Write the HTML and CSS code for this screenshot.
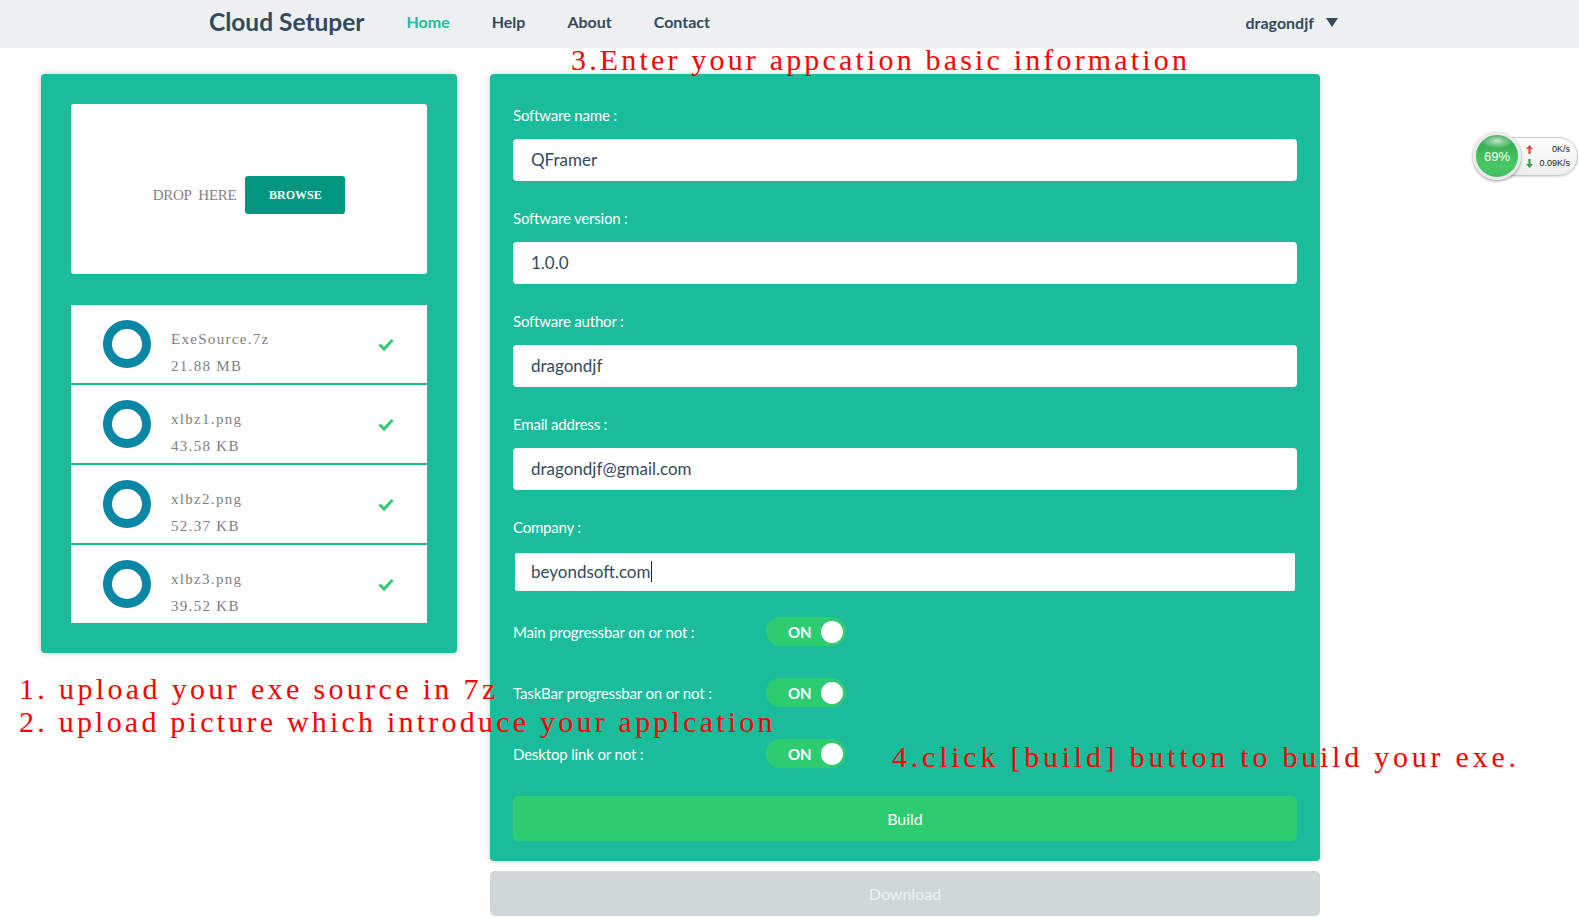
FILE: index.html
```html
<!DOCTYPE html>
<html lang="en">
<head>
<meta charset="utf-8">
<title>Cloud Setuper</title>
<link rel="stylesheet" href="styles.css">
</head>
<body>
<nav class="navbar">
  <div class="nav-inner">
    <a class="brand" href="#">Cloud Setuper</a>
    <ul class="nav-links">
      <li class="active"><a href="#">Home</a></li>
      <li><a href="#">Help</a></li>
      <li><a href="#">About</a></li>
      <li><a href="#">Contact</a></li>
    </ul>
    <div class="user">dragondjf <span class="caret"></span></div>
  </div>
</nav>

<main class="main">
  <section class="upload-panel">
    <div class="dropzone">
      <span class="drop-text">DROP HERE</span>
      <button class="browse" type="button">BROWSE</button>
    </div>
    <ul class="files">
      <li class="file">
        <span class="ring"></span>
        <div class="file-info"><div>ExeSource.7z</div><div>21.88 MB</div></div>
        <svg class="check" viewBox="0 0 16 13" width="16" height="13"><polyline points="1.5,6.5 6,11 14.5,2" fill="none" stroke="#2ecc71" stroke-width="3"/></svg>
      </li>
      <li class="file">
        <span class="ring"></span>
        <div class="file-info"><div>xlbz1.png</div><div>43.58 KB</div></div>
        <svg class="check" viewBox="0 0 16 13" width="16" height="13"><polyline points="1.5,6.5 6,11 14.5,2" fill="none" stroke="#2ecc71" stroke-width="3"/></svg>
      </li>
      <li class="file">
        <span class="ring"></span>
        <div class="file-info"><div>xlbz2.png</div><div>52.37 KB</div></div>
        <svg class="check" viewBox="0 0 16 13" width="16" height="13"><polyline points="1.5,6.5 6,11 14.5,2" fill="none" stroke="#2ecc71" stroke-width="3"/></svg>
      </li>
      <li class="file">
        <span class="ring"></span>
        <div class="file-info"><div>xlbz3.png</div><div>39.52 KB</div></div>
        <svg class="check" viewBox="0 0 16 13" width="16" height="13"><polyline points="1.5,6.5 6,11 14.5,2" fill="none" stroke="#2ecc71" stroke-width="3"/></svg>
      </li>
    </ul>
  </section>

  <section class="form-col">
    <form class="form-panel">
      <div class="group">
        <label>Software name :</label>
        <div class="input">QFramer</div>
      </div>
      <div class="group">
        <label>Software version :</label>
        <div class="input">1.0.0</div>
      </div>
      <div class="group">
        <label>Software author :</label>
        <div class="input">dragondjf</div>
      </div>
      <div class="group">
        <label>Email address :</label>
        <div class="input">dragondjf@gmail.com</div>
      </div>
      <div class="group group-last">
        <label>Company :</label>
        <div class="input focused">beyondsoft.com<span class="text-caret"></span></div>
      </div>
      <div class="switches">
        <div class="switch-row">
          <span class="switch-label">Main progressbar on or not :</span>
          <span class="switch"><span class="switch-text">ON</span><span class="knob"></span></span>
        </div>
        <div class="switch-row">
          <span class="switch-label">TaskBar progressbar on or not :</span>
          <span class="switch"><span class="switch-text">ON</span><span class="knob"></span></span>
        </div>
        <div class="switch-row">
          <span class="switch-label">Desktop link or not :</span>
          <span class="switch"><span class="switch-text">ON</span><span class="knob"></span></span>
        </div>
      </div>
      <button class="build" type="button">Build</button>
    </form>
    <button class="download" type="button">Download</button>
  </section>
</main>

<p class="note note3">3.Enter your appcation basic information</p>
<p class="note note1">1. upload your exe source in 7z</p>
<p class="note note2">2. upload picture which introduce your applcation</p>
<p class="note note4">4.click [build] button to build your exe.</p>

<div class="netspeed">
  <div class="ns-pill">
    <div class="ns-line">
      <svg class="ns-arrow" viewBox="0 0 7 9" width="7" height="9"><path d="M3.5 0 L7 4 L4.6 4 L4.6 9 L2.4 9 L2.4 4 L0 4 Z" fill="#e24a3b"/></svg>
      <span>0K/s</span>
    </div>
    <div class="ns-line">
      <svg class="ns-arrow" viewBox="0 0 7 9" width="7" height="9"><path d="M3.5 9 L7 5 L4.6 5 L4.6 0 L2.4 0 L2.4 5 L0 5 Z" fill="#2e9e4a"/></svg>
      <span>0.09K/s</span>
    </div>
  </div>
  <div class="ns-ball"><span>69%</span></div>
</div>
</body>
</html>
```
FILE: styles.css
```css
html, body {
  margin: 0;
  padding: 0;
}

body {
  position: relative;
  background: #ffffff;
  font-family: Lato, "Open Sans", sans-serif;
  color: #34495e;
  min-height: 918px;
  overflow: hidden;
}

/* ---------- navbar ---------- */
.navbar {
  height: 48px;
  background: #ecf0f1;
}

.nav-inner {
  height: 48px;
  box-sizing: border-box;
  display: flex;
  align-items: center;
  padding: 0 241px 4px 209px;
}

.brand {
  font-size: 24.5px;
  font-weight: 700;
  color: #34495e;
  text-decoration: none;
  margin-right: 21px;
  line-height: 44px;
}

.nav-links {
  list-style: none;
  margin: 0;
  padding: 0;
  display: flex;
}

.nav-links a {
  display: block;
  padding: 0 21px;
  font-size: 16px;
  font-weight: 700;
  color: #34495e;
  text-decoration: none;
  line-height: 44px;
}

.nav-links .active a {
  color: #1abc9c;
}

.user {
  margin-left: auto;
  font-size: 16px;
  font-weight: 700;
  color: #34495e;
  display: flex;
  align-items: center;
}

.caret {
  width: 0;
  height: 0;
  margin-left: 12px;
  border-left: 6px solid transparent;
  border-right: 6px solid transparent;
  border-top: 9px solid #34495e;
}

/* ---------- main ---------- */
.main {
  display: flex;
  align-items: flex-start;
  gap: 33px;
  padding: 26px 0 0 41px;
}

.upload-panel {
  width: 416px;
  box-sizing: border-box;
  padding: 30px;
  background: #1abc9c;
  border-radius: 4px;
  box-shadow: 0 0 6px rgba(0, 0, 0, 0.22);
}

.dropzone {
  height: 170px;
  box-sizing: border-box;
  padding-top: 12px;
  background: #fff;
  border-radius: 3px;
  display: flex;
  align-items: center;
  justify-content: center;
  gap: 9px;
  margin-bottom: 31px;
}

.drop-text {
  font-family: "Liberation Serif", serif;
  font-size: 15px;
  color: #7f8389;
  letter-spacing: -0.3px;
  word-spacing: 4px;
}

.browse {
  width: 100px;
  height: 38px;
  border: none;
  border-radius: 3px;
  background: #00977e;
  color: #fff;
  font-family: "Liberation Serif", serif;
  font-weight: 700;
  font-size: 12px;
  padding: 0;
}

.files {
  list-style: none;
  margin: 0;
  padding: 0;
  display: flex;
  flex-direction: column;
  gap: 2px;
}

.file {
  height: 78px;
  background: #fff;
  display: flex;
  align-items: center;
  padding: 0 33px 0 32px;
}

.ring {
  flex: none;
  width: 48px;
  height: 48px;
  box-sizing: border-box;
  border: 9px solid #0a87a3;
  border-radius: 50%;
  margin-right: 20px;
}

.file-info {
  flex: 1;
  padding-top: 17px;
  font-family: "Liberation Serif", serif;
  font-size: 15px;
  line-height: 27px;
  color: #808080;
  letter-spacing: 1.3px;
}

.check {
  flex: none;
}

/* ---------- form ---------- */
.form-col {
  width: 830px;
}

.form-panel {
  background: #1abc9c;
  border-radius: 4px;
  padding: 31px 23px 20px;
  box-shadow: 0 0 6px rgba(0, 0, 0, 0.18);
}

.group {
  margin-bottom: 27px;
}

.group-last {
  margin-bottom: 24px;
}

.group label {
  display: block;
  font-size: 15px;
  line-height: 20px;
  color: #fff;
  margin-bottom: 14px;
  letter-spacing: -0.2px;
}

.input {
  height: 42px;
  box-sizing: border-box;
  border: 2px solid #fff;
  border-radius: 4px;
  background: #fff;
  padding: 0 16px;
  font-size: 17px;
  line-height: 38px;
  color: #34495e;
}

.input.focused {
  border-color: #1abc9c;
}

.text-caret {
  display: inline-block;
  width: 1px;
  height: 21px;
  background: #222;
  vertical-align: -4px;
}

.switches {
  display: flex;
  flex-direction: column;
  gap: 32px;
  margin-bottom: 28px;
}

.switch-row {
  display: flex;
  align-items: center;
  height: 29px;
}

.switch-label {
  width: 253px;
  font-size: 15px;
  color: #fff;
  letter-spacing: -0.15px;
}

.switch {
  width: 80px;
  height: 29px;
  box-sizing: border-box;
  border-radius: 15px;
  background: #2ecc71;
  display: flex;
  align-items: center;
  justify-content: space-between;
  padding: 0 3px 0 22px;
}

.switch-text {
  font-size: 15px;
  font-weight: 700;
  color: #fff;
}

.knob {
  width: 22px;
  height: 22px;
  border-radius: 50%;
  background: #fff;
}

.build {
  display: block;
  width: 100%;
  height: 45px;
  border: none;
  border-radius: 5px;
  background: #2ecc71;
  color: #fff;
  font-family: Lato, sans-serif;
  font-size: 16px;
}

.download {
  display: block;
  width: 100%;
  height: 45px;
  margin-top: 10px;
  border: none;
  border-radius: 5px;
  background: #d1d6d9;
  color: #eef1f2;
  font-family: Lato, sans-serif;
  font-size: 16px;
}

/* ---------- annotations (overlaid on the screenshot) ---------- */
.note {
  position: absolute;
  margin: 0;
  font-family: "Liberation Serif", serif;
  font-size: 30px;
  line-height: 30px;
  color: #ff0000;
  white-space: nowrap;
}

.note3 {
  left: 571px;
  top: 45px;
  letter-spacing: 3.17px;
}

.note1 {
  left: 19px;
  top: 674px;
  letter-spacing: 3.35px;
}

.note2 {
  left: 19px;
  top: 707px;
  letter-spacing: 3.22px;
}

.note4 {
  left: 892px;
  top: 742px;
  letter-spacing: 3.77px;
}

/* ---------- floating net speed widget ---------- */
.netspeed {
  position: absolute;
  left: 1470px;
  top: 130px;
  width: 109px;
  height: 54px;
}

.ns-pill {
  position: absolute;
  left: 22px;
  top: 7px;
  width: 86px;
  height: 39px;
  box-sizing: border-box;
  border: 1px solid #c9c9c9;
  border-radius: 0 19px 19px 0;
  background: linear-gradient(#ffffff, #ececec);
  box-shadow: 0 1px 2px rgba(0, 0, 0, 0.15);
  padding: 4px 7px 0 33px;
}

.ns-line {
  display: flex;
  align-items: center;
  justify-content: space-between;
  height: 14px;
  font-family: "Liberation Sans", sans-serif;
  font-size: 9px;
  color: #222;
}

.ns-ball {
  position: absolute;
  left: 3px;
  top: 2px;
  width: 48px;
  height: 48px;
  box-sizing: border-box;
  border-radius: 50%;
  border: 3px solid #eaeaea;
  background:
    radial-gradient(ellipse 40% 18% at 50% 14%, rgba(255, 255, 255, 0.7) 0, rgba(255, 255, 255, 0) 100%),
    linear-gradient(#2f9a48 0, #3dbb5a 40%, #46c865 75%, #3fbd5d 100%);
  box-shadow: 0 1px 3px rgba(0, 0, 0, 0.45);
  display: flex;
  align-items: center;
  justify-content: center;
  font-family: "Liberation Sans", sans-serif;
  font-size: 13px;
  color: #fff;
}
```
